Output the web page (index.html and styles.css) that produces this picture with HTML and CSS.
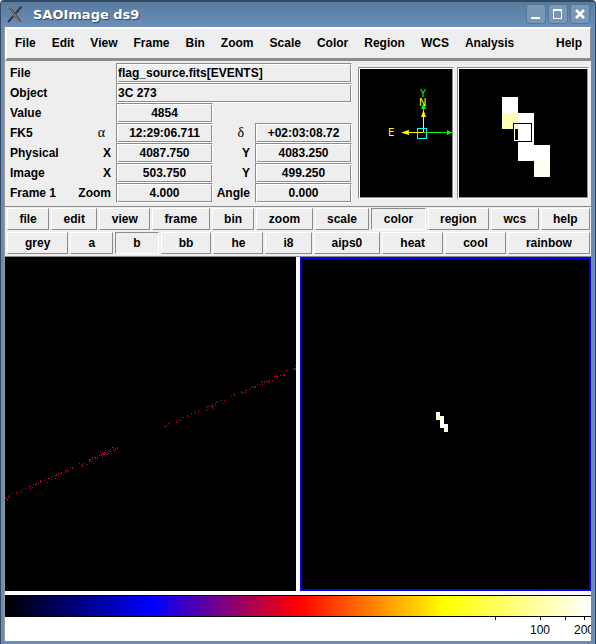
FILE: index.html
```html
<!DOCTYPE html>
<html lang="en">
<head>
  <meta charset="UTF-8">
  <title>SAOImage ds9</title>
  <link rel="stylesheet" href="styles.css">
</head>
<body>

<div class="window">
  <header class="titlebar">
    <svg class="logo" width="17" height="17" viewBox="0 0 17 17">
      <path d="M1 1h4.500l11 15h-4.500z" fill="#4a4e50" stroke="#7d8a94"/>
      <path d="M15.500 .5L9.500 7.500M7.500 10L2 16" stroke="#34383b" stroke-width="2"/>
      <path d="M4 2l9 13" stroke="#8b8f90"/>
    </svg>
    <h1>SAOImage ds9</h1>
    <button class="win-btn" aria-label="Minimize"><svg width="18" height="18" viewBox="0 0 18 18"><path d="M4 13h9" stroke="#fff" stroke-width="2"/></svg></button>
    <button class="win-btn" aria-label="Maximize"><svg width="18" height="18" viewBox="0 0 18 18"><path d="M4.500 4v9.500h8V5" stroke="#fff" fill="none"/><path d="M4 5h9" stroke="#fff" stroke-width="2"/></svg></button>
    <button class="win-btn" aria-label="Close"><svg width="18" height="18" viewBox="0 0 18 18"><path d="M5 5l8 8M13 5l-8 8" stroke="#fff" stroke-width="2.500"/></svg></button>
  </header>

  <main class="content">
    <nav class="menubar">
      <a href="#">File</a>
      <a href="#">Edit</a>
      <a href="#">View</a>
      <a href="#">Frame</a>
      <a href="#">Bin</a>
      <a href="#">Zoom</a>
      <a href="#">Scale</a>
      <a href="#">Color</a>
      <a href="#">Region</a>
      <a href="#">WCS</a>
      <a href="#">Analysis</a>
      <a href="#" class="help">Help</a>
    </nav>

    <section class="info">
      <form class="fields">
        <label class="name" for="file">File</label>
        <input class="wide" id="file" value="flag_source.fits[EVENTS]" readonly>

        <label class="name" for="object">Object</label>
        <input class="wide" id="object" value="3C 273" readonly>

        <label class="name" for="value">Value</label>
        <input class="value" id="value" value="4854" readonly>

        <span>FK5</span>
        <label class="axis greek" for="ra">α</label>
        <input id="ra" value="12:29:06.711" readonly>
        <label class="axis greek" for="dec">δ</label>
        <input id="dec" value="+02:03:08.72" readonly>

        <span>Physical</span>
        <label class="axis" for="physX">X</label>
        <input id="physX" value="4087.750" readonly>
        <label class="axis" for="physY">Y</label>
        <input id="physY" value="4083.250" readonly>

        <span>Image</span>
        <label class="axis" for="imgX">X</label>
        <input id="imgX" value="503.750" readonly>
        <label class="axis" for="imgY">Y</label>
        <input id="imgY" value="499.250" readonly>

        <span>Frame 1</span>
        <label class="axis" for="zoom">Zoom</label>
        <input id="zoom" value="4.000" readonly>
        <label class="axis" for="angle">Angle</label>
        <input id="angle" value="0.000" readonly>
      </form>

      <svg class="panner" viewBox="0 0 92 128">
        <!-- image axes -->
        <path d="M63 63.500h29M63.500 63V35" stroke="#0f0"/>
        <path d="M92 63.500l-5-2.500v5zM63.500 34l-2.500 6h5z" fill="#0f0"/>
        <!-- north and east -->
        <path d="M63.500 63V46M63 63.500H46" stroke="#ff0"/>
        <path d="M63.500 41l-2.500 7h5zM41 63.500l8-2.500v5z" fill="#ff0"/>
        <rect x="57.500" y="59.500" width="9" height="10" fill="none" stroke="#0ff"/>
        <text x="60" y="28" fill="#0f0">Y</text>
        <text x="59" y="37" fill="#ff0">N</text>
        <text x="28" y="67" fill="#ff0">E</text>
      </svg>

      <svg class="magnifier" viewBox="0 0 128 128">
        <path d="M43 28h16v16h16v32h16v32H75V92H59V60H43z" fill="#fff"/>
        <path d="M43 44h16v16H43z" fill="#ffffb4"/>
        <path d="M75 92h16v16H75z" fill="#ffffee"/>
        <rect x="55.500" y="55.500" width="16" height="16" fill="none" stroke="#fff"/>
        <rect x="54.500" y="54.500" width="18" height="18" fill="none" stroke="#000"/>
      </svg>
    </section>

    <section class="toolbar">
      <div class="row">
        <button>file</button>
        <button>edit</button>
        <button>view</button>
        <button>frame</button>
        <button>bin</button>
        <button>zoom</button>
        <button>scale</button>
        <button class="active">color</button>
        <button>region</button>
        <button>wcs</button>
        <button>help</button>
      </div>
      <div class="row">
        <button>grey</button>
        <button>a</button>
        <button class="active">b</button>
        <button>bb</button>
        <button>he</button>
        <button>i8</button>
        <button>aips0</button>
        <button>heat</button>
        <button>cool</button>
        <button>rainbow</button>
      </div>
    </section>

    <section class="frames">
      <div class="frame">
        <svg id="events" viewBox="0 0 291 334" shape-rendering="crispEdges"></svg>
      </div>
      <div class="frame selected">
        <svg viewBox="0 0 287 330" shape-rendering="crispEdges">
          <path d="M134 153h4v4h4v8h4v8h-4v-4h-4v-8h-4z" fill="#fff"/>
          <path d="M134 157h4v4h-4z" fill="#ffffb4"/>
          <path d="M142 169h4v4h-4z" fill="#ffffee"/>
        </svg>
      </div>
    </section>

    <section class="colorbar">
      <div class="gradient"></div>
      <svg class="scale" height="23">
        <path d="M490.500 0v3M535.500 0v3M560.500 0v3M579.500 0v3" stroke="#000"/>
        <text x="535" y="17">100</text>
        <text x="579" y="17">200</text>
      </svg>
    </section>
  </main>
</div>

<script>
  // Detected events as x,y pairs; a trailing r marks a brighter pixel
  const leftTrail = "0,240 1,241 2,242 2,243 3,240 3,239 4,238 5,240 7,236 11,235r 12,236 15,234 16,235 17,232 20,231 24,229 25,229 25,231 27,230 28,227 30,227 31,227 31,226 33,226 35,225 35,223 35,224 36,224 39,223 40,221 42,225 43,221 44,221 46,222 46,219 48,220 49,218 50,219 50,221 51,218 51,217 53,217r 54,216 56,215 56,216 60,214 60,215 61,213r 62,213 63,214 65,210 67,210 67,211 74,206 76,207 77,208 77,209 78,206 82,207 84,202 84,203 85,202 85,204 86,204 87,200 87,201 87,202 89,200 90,200 90,201 92,200 92,201 94,198 96,198 96,197 97,197 97,195 97,200 98,196 98,197 99,197 99,195 100,196r 101,195 102,197 103,196 103,194 104,194 104,196 105,194 105,192 107,190 108,190 108,192 109,193 110,191 110,193 112,190 112,191r";
  const rightTrail = "159,170 160,169r 162,168 164,168 163,166 165,165 171,163 171,165 174,163 176,163 178,160 182,158 183,159 186,156r 189,154 190,156 193,153 193,155 200,153 201,150 202,149 202,152 203,149 205,148 206,149 207,148 207,149 207,150 208,147 208,151 210,146 210,148 211,144 212,145 214,144 216,143 217,146 219,143 226,138 228,136 229,137 229,138 236,134 236,135 237,136 238,135 240,135 240,133 241,133 244,132r 246,130 247,130 248,129 249,130 250,129r 250,130 252,127 255,127 257,127 256,125 257,124 259,124 259,125 261,124 262,124r 263,125 264,123 264,124 267,123 269,119 271,117 271,119r 272,119 272,121 275,118 278,118 279,117 279,118 281,113r 287,112 288,111 289,112 290,111 290,112 290,108";

  function renderEvents(id, list) {
    const dots = list.split(' ').map(p => {
      const [x, y] = p.split(',');
      return `<rect x="${x}" y="${parseInt(y)}" width="1" height="1" fill="${y.endsWith('r') ? '#f00' : '#a80057'}"/>`;
    });
    document.getElementById(id).innerHTML += dots.join('');
  }

  renderEvents('events', leftTrail);
  renderEvents('events', rightTrail);
</script>

</body>
</html>
```
FILE: styles.css
```css
* { box-sizing: border-box; }
body { margin: 0; background: #fff; font: bold 12px "Liberation Sans", Arial, sans-serif; color: #000; }
button, input { font: inherit; color: inherit; }
svg { display: block; }

.window { display: flex; flex-direction: column; min-height: 100vh; padding: 0 4px 3px 3px; background: #6a8db5; border: 1px solid #34495f; border-top-width: 2px; border-radius: 4px 4px 0 0; }

.titlebar { display: flex; align-items: center; gap: 2px; height: 25px; margin: 0 -3px; padding: 0 4px 1px 5px; background: linear-gradient(#587a9f, #6b8fb9); }
.titlebar h1 { flex: 1; margin: 0 0 0 8px; font: bold 13px "DejaVu Sans", sans-serif; color: #fff; text-shadow: 1px 1px 1px #2f4560; }
.win-btn { width: 20px; height: 20px; padding: 0; background: #7896b6; border: 1px solid #56779c; border-radius: 3px; }

.content { display: flex; flex-direction: column; flex: 1; background: #eee; border-left: 1px solid #999; }

.menubar { display: flex; align-items: center; gap: 16px; height: 34px; padding: 0 8px 2px; border: solid; border-width: 2px 1px 3px 2px; border-color: #fff #8c8c8c #8c8c8c #fff; }
.menubar a { color: #000; text-decoration: none; }
.menubar .help { margin-left: auto; }

.info { display: flex; gap: 3px; height: 145px; padding: 2px 2px 0 5px; }
.fields { display: grid; grid-template-columns: 60px 46px 97px 42px 97px; grid-auto-rows: 20px; align-items: center; margin-right: 3px; }
.fields input { width: 100%; height: 20px; padding: 0; background: #eee; text-align: center; }
.fields input, .panner, .magnifier { border: 1px solid; border-color: #8c8c8c #fff #fff #8c8c8c; box-shadow: inset 1px 1px 0 #fff, inset -1px -1px 0 #8c8c8c; border-radius: 0; outline: none; }
.fields .name { grid-column: 1 / 3; }
.fields .wide { grid-column: 3 / 6; padding-left: 1px; text-align: left; }
.fields .value { grid-column: 3; }
.fields .value + span { grid-column: 1; }
.axis { padding-right: 5px; text-align: right; }
.greek { padding-right: 11px; font: 14px "Liberation Serif", serif; }
.panner, .magnifier { flex: none; height: 132px; margin-top: 4px; padding: 1px; background: #000 content-box; }
.panner { width: 96px; }
.panner text { font: 10px "DejaVu Sans", sans-serif; }
.magnifier { width: 132px; }

.toolbar { display: flex; flex-direction: column; gap: 2px; padding: 1px 1px 2px 2px; border-top: 1px solid #8c8c8c; border-bottom: 1px solid #8c8c8c; }
.row { display: flex; gap: 2px; }
.row button { flex: 1 1 auto; height: 22px; padding: 0 8px 1px; background: #eee; border: 1px solid; border-color: #fff #8c8c8c #8c8c8c #fff; }
.row .active { border-color: #8c8c8c #fff #fff #8c8c8c; }

.frames { display: grid; grid-template-columns: 1fr 1fr; gap: 4px; flex: 1; background: #fff; }
.frame { background: #000; }
.frame svg { width: 100%; height: 100%; }
.selected { border: 2px solid #00f; }

.colorbar { padding: 4px 0 1px; background: #fff; overflow: hidden; }
.gradient { height: 22px; border: 1px solid #000; border-width: 1px 0; background: linear-gradient(to right, #000, #00f 25%, #f00 50%, #ff0 75%, #fff); }
.scale { width: 100%; font-size: 12px; font-weight: normal; }
.scale text { text-anchor: middle; }
```
